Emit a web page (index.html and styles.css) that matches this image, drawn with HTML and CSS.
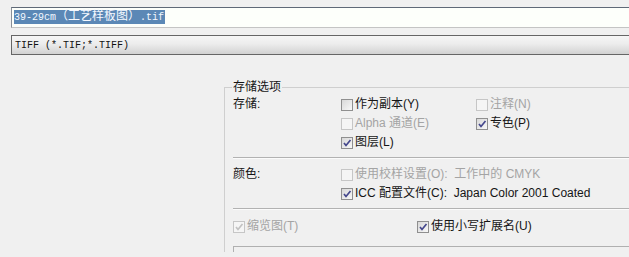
FILE: index.html
```html
<!DOCTYPE html>
<html lang="zh-CN">

<head>
    <meta charset="UTF-8">
    <title>存储为</title>
    <link rel="stylesheet" href="styles.css">
</head>

<body>
    <div class="file-name"><span class="sel">39-29cm<span class="wide">（工艺样板图）</span>.tif</span></div>
    <div class="file-type">TIFF (*.TIF;*.TIFF)</div>

    <fieldset class="options">
        <legend>存储选项</legend>

        <div class="group">
            <div class="label rows-3">存储:</div>
            <label class="check"><span class="box"></span>作为副本(Y)</label>
            <label class="check off"><span class="box"></span>注释(N)</label>
            <label class="check off"><span class="box"></span>Alpha 通道(E)</label>
            <label class="check"><span class="box"><svg viewBox="0 0 10 10"><path d="M2 5l2 2.5L8.5 2"/></svg></span>专色(P)</label>
            <label class="check"><span class="box"><svg viewBox="0 0 10 10"><path d="M2 5l2 2.5L8.5 2"/></svg></span>图层(L)</label>
        </div>

        <div class="sep"></div>

        <div class="group">
            <div class="label rows-2">颜色:</div>
            <label class="check off span"><span class="box"></span>使用校样设置(O):&nbsp; 工作中的 CMYK</label>
            <label class="check span"><span class="box"><svg viewBox="0 0 10 10"><path d="M2 5l2 2.5L8.5 2"/></svg></span>ICC 配置文件(C):&nbsp; Japan Color 2001 Coated</label>
        </div>

        <div class="sep"></div>

        <div class="bottom-row">
            <label class="check off thumb"><span class="box"><svg viewBox="0 0 10 10"><path d="M2 5l2 2.5L8.5 2"/></svg></span>缩览图(T)</label>
            <label class="check"><span class="box"><svg viewBox="0 0 10 10"><path d="M2 5l2 2.5L8.5 2"/></svg></span>使用小写扩展名(U)</label>
        </div>

        <div class="preview-box"></div>
    </fieldset>
</body>

</html>
```

FILE: styles.css
```css
* {
    margin: 0;
    padding: 0;
    box-sizing: border-box;
}

body {
    font-family: "Liberation Sans", "Noto Sans CJK SC", sans-serif;
    font-size: 12px;
    color: #151515;
    background-color: #f0f0f0;
    overflow: hidden;
    height: 257px;
    padding-top: 7px;
}

.file-name {
    margin-left: 11px;
    height: 21px;
    border-top: 1px solid #5f6977;
    border-left: 1px solid #8a9099;
    border-bottom: 1px solid #c4c4c4;
    background: #fdfffb;
    padding: 2px 0 0 2px;
    font-family: "Liberation Mono", "Noto Sans CJK SC", monospace;
    font-size: 10px;
    line-height: 14px;
}

.sel {
    display: inline-block;
    background: #5b88b6;
    color: #f4f8ff;
    padding-right: 1px;
    height: 14px;
}

.wide {
    font-size: 12px;
}

.file-type {
    margin: 7px 0 0 11px;
    height: 20px;
    border: 1px solid #666;
    border-right: none;
    background: linear-gradient(#f6f6f6, #ececec 45%, #d2d2d2);
    padding-left: 3px;
    font-family: "Liberation Mono", "Noto Sans CJK SC", monospace;
    font-size: 10px;
    line-height: 19px;
    color: #111;
}

.options {
    margin: 24px 0 0 224px;
    width: 405px;
    border: 1px solid #cfcfcf;
    border-right: none;
    border-bottom: none;
    padding: 0 0 0 8px;
}

.options legend {
    padding: 0 1px;
    margin-left: -1px;
    font-size: 12px;
    line-height: 16px;
}

.group {
    display: grid;
    grid-template-columns: 108px 135px 1fr;
    grid-auto-rows: 19px;
}

.label {
    line-height: 19px;
}

.rows-3 {
    grid-row: span 3;
}

.rows-2 {
    grid-row: span 2;
}

.check {
    display: flex;
    align-items: center;
    gap: 2px;
    white-space: nowrap;
    line-height: 19px;
}

.check.span {
    grid-column: 2 / 4;
}

.check.off {
    color: #a4a4a4;
}

.box {
    width: 12px;
    height: 12px;
    flex: none;
    border: 1px solid #8f8f8f;
    background: linear-gradient(135deg, #d8d8d8, #f8f8f8);
    display: flex;
    align-items: center;
    justify-content: center;
}

.off .box {
    border-color: #c6c6c6;
    background: #f5f5f5;
}

.box svg {
    width: 10px;
    height: 10px;
}

.box path {
    fill: none;
    stroke: #44478c;
    stroke-width: 1.7;
}

.off .box path {
    stroke: #c2c2c2;
}

.sep {
    margin: 5px 0 6px;
    height: 2px;
    border-top: 1px solid #b2b2b2;
    border-bottom: 1px solid #fbfbfb;
}

.bottom-row {
    display: flex;
    margin-top: 7px;
    height: 19px;
}

.thumb {
    width: 184px;
}

.preview-box {
    margin-top: 10px;
    height: 6px;
    border-top: 1px solid #b0b0b0;
    border-left: 1px solid #b0b0b0;
}
```
